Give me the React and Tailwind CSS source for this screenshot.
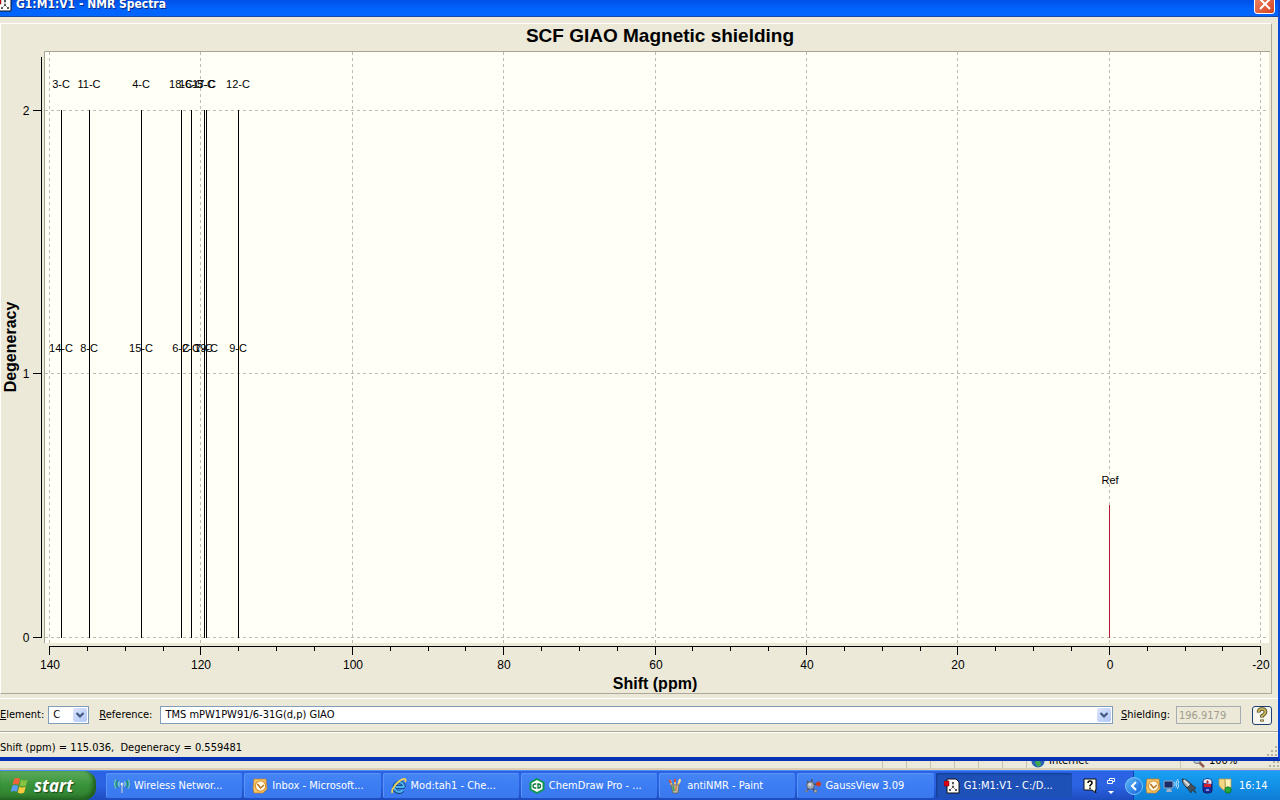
import { useState } from 'react';

const TICKS = [140, 120, 100, 80, 60, 40, 20, 0, -20];

const PEAKS = [
  { x: 61, top: '3-C', bottom: '14-C' },
  { x: 89, top: '11-C', bottom: '8-C' },
  { x: 141, top: '4-C', bottom: '15-C' },
  { x: 181, top: '18-C', bottom: '6-C' },
  { x: 191, top: '16-C', bottom: '2-C' },
  { x: 204, top: '17-C', bottom: '7-C' },
  { x: 206, top: '5-C', bottom: '19-C' },
  { x: 238, top: '12-C', bottom: '9-C' }
];

const LEVELS = [
  { value: 2, y: 110 },
  { value: 1, y: 373 },
  { value: 0, y: 637 }
];

const ppmToX = (ppm) => Math.round(49 + (140 - ppm) * 7.57);

const MINOR = [];
for (let ppm = 135; ppm > -20; ppm -= 5) {
  if (ppm % 20 !== 0) MINOR.push(ppm);
}

const SpectrumChart = () => (
  <svg viewBox="1 24 1270 669" className="block w-full h-auto" fontFamily='"Liberation Sans", Arial, sans-serif' role="img" aria-label="SCF GIAO Magnetic shielding">
    <rect x="45" y="52" width="1224" height="591" fill="#fffff6" />
    <path d="M44.5 643V51.5H1270" fill="none" stroke="#a5a596" />

    {/* Grid */}
    <g stroke="#bcbcb2" strokeDasharray="3 3" shapeRendering="crispEdges">
      {TICKS.map((ppm) => (
        <path key={ppm} d={`M${ppmToX(ppm) + 0.5} 52V643`} />
      ))}
      {LEVELS.map((level) => (
        <path key={level.value} d={`M45 ${level.y + 0.5}H1267`} />
      ))}
    </g>

    {/* Axes */}
    <g stroke="#000" shapeRendering="crispEdges">
      <path d="M41.5 57V638" />
      {LEVELS.map((level) => (
        <path key={level.value} d={`M33 ${level.y + 0.5}H41`} />
      ))}
      <path d="M49 646.5H1261" />
      {TICKS.map((ppm) => (
        <path key={ppm} d={`M${ppmToX(ppm) + 0.5} 647V655`} />
      ))}
      {MINOR.map((ppm) => (
        <path key={ppm} d={`M${ppmToX(ppm) + 0.5} 647V651`} />
      ))}
    </g>

    {/* Peaks */}
    <g shapeRendering="crispEdges" stroke="#000">
      {PEAKS.map((peak) => (
        <path key={peak.x} d={`M${peak.x + 0.5} 110V638`} />
      ))}
    </g>
    <rect x="1109" y="505" width="1" height="133" fill="#b8183c" />
    <g fontSize="11" textAnchor="middle">
      {PEAKS.map((peak) => (
        <g key={peak.x}>
          <text x={peak.x} y="88">{peak.top}</text>
          <text x={peak.x} y="352">{peak.bottom}</text>
        </g>
      ))}
      <text x="1110" y="484">Ref</text>
    </g>

    <g fontSize="12" textAnchor="middle">
      {TICKS.map((ppm) => (
        <text key={ppm} x={ppmToX(ppm) + 1} y="669">{ppm}</text>
      ))}
      {LEVELS.map((level) => (
        <text key={level.value} x="26" y={level.y + 5}>{level.value}</text>
      ))}
    </g>
    <g fontWeight="bold" textAnchor="middle">
      <text x="660" y="42" fontSize="19">SCF GIAO Magnetic shielding</text>
      <text x="655" y="689" fontSize="16">Shift (ppm)</text>
      <text transform="translate(16 347) rotate(-90)" fontSize="16">Degeneracy</text>
    </g>
  </svg>
);

const MoleculeIcon = () => (
  <svg viewBox="0 0 16 16" className="w-4 h-4 shrink-0">
    <path d="M3 1h9l3 3v11H3z" fill="#fff" stroke="#111" />
    <path d="M9 5v4l-3 3M9 9l3 3" stroke="#999" strokeWidth="1" fill="none" />
    <path d="M8 4h2v2H8zM5 11h2v2H5zM11 11h2v2h-2zM8 8h2v2H8z" fill="#555" />
    <path d="M0 3h5v5H0z" fill="#e00012" stroke="#600" strokeWidth=".5" />
  </svg>
);

const WirelessIcon = () => (
  <svg viewBox="0 0 16 16" className="w-4 h-4 shrink-0" fill="none">
    <path d="M8 7v8" stroke="#a8bcc8" strokeWidth="1.5" />
    <circle cx="8" cy="6" r="1.5" fill="#d6e6e6" />
    <path d="M5.5 3.5q-2 2.500 0 5M10.500 3.500q2 2.500 0 5" stroke="#a8e8b8" />
    <path d="M3.500 2.500q-2.500 3.500 0 7M12.500 2.500q2.500 3.500 0 7" stroke="#1c9a5c" strokeWidth="1.300" />
    <path d="M1.500 1.500q-2 4.500 0 9M14.500 1.500q2 4.500 0 9" stroke="#7cd89c" />
  </svg>
);

const OutlookIcon = () => (
  <svg viewBox="0 0 16 16" className="w-4 h-4 shrink-0">
    <path d="M2 1h12l1 10-4 4H2l-1-5z" fill="#f6c86a" stroke="#c27a20" strokeWidth=".7" />
    <circle cx="8.500" cy="8" r="5.200" fill="#fff8e6" stroke="#e09a35" strokeWidth="1.300" />
    <path d="M5.500 6l3 4 3.500-3" stroke="#b8741c" strokeWidth="1.500" fill="none" />
  </svg>
);

const ExplorerIcon = () => (
  <svg viewBox="0 0 16 16" className="w-4 h-4 shrink-0" fill="none">
    <path d="M13.500 9H5M13.200 9A5 5 0 1 0 12 12.500" stroke="#123a70" strokeWidth="3.400" />
    <path d="M13 9H5M13 9A4.800 4.800 0 1 0 12 12" stroke="#4cb4ee" strokeWidth="2.200" />
    <path d="M1.500 15C-.5 12 7 2 13 1c2-.3 2 1.500 1 3" stroke="#f0d050" strokeWidth="1.800" />
  </svg>
);

const ChemDrawIcon = () => (
  <svg viewBox="0 0 16 16" className="w-4 h-4 shrink-0" fill="none">
    <path d="M8 0l7.500 4v8L8 16 .5 12V4z" fill="#0d9650" />
    <path d="M8 2l5.500 3v6L8 14l-5.500-3V5z" fill="#fff" />
    <path d="M7.300 6H6a2 2 0 0 0 0 4h1.300M9 6v4h.5a2 2 0 0 0 0-4z" stroke="#08743c" strokeWidth="1.300" />
  </svg>
);

const PaintIcon = () => (
  <svg viewBox="0 0 16 16" className="w-4 h-4 shrink-0" fill="none">
    <path d="M5 8L3 2M8 8V1M10 9l3-7" stroke="#e8c070" strokeWidth="2" />
    <path d="M4 5L2 2M8 4V1" stroke="#d04838" strokeWidth="1.800" />
    <path d="M12 5l1-4" stroke="#f0e0a0" strokeWidth="2" />
    <path d="M4 7h8l-1 8H6z" fill="#b6b8ae" stroke="#6a5a4a" strokeWidth=".7" />
    <path d="M6 8l1 5" stroke="#50a060" strokeWidth="2" />
    <path d="M9 8v5" stroke="#d88438" strokeWidth="1.500" />
  </svg>
);

const GaussViewIcon = () => (
  <svg viewBox="0 0 16 16" className="w-4 h-4 shrink-0" fill="none">
    <path d="M6 7l6-1M6 8l4 5M6 7L2 3M5 8l-3 5M6 7l1-6" stroke="#484850" strokeWidth="1.300" />
    <circle cx="5.500" cy="7.500" r="3.800" fill="#a4acb8" stroke="#5c6270" />
    <circle cx="4.800" cy="6.500" r="1.500" fill="#d6dae0" />
    <circle cx="13.500" cy="6" r="2.500" fill="#cc3d20" />
    <circle cx="10.500" cy="13" r="1.700" fill="#aaaeb6" stroke="#444" strokeWidth=".5" />
    <circle cx="1.500" cy="13" r="1.300" fill="#7c8088" />
  </svg>
);

const WindowsLogo = () => (
  <svg viewBox="0 0 20 18" className="w-5 h-5 shrink-0">
    <path d="M4 2q3-2 6 0L8.500 8q-3-2-6 0z" fill="#ee6438" />
    <path d="M11 2.500q3 2 6.500 0L16 8.500q-3 2-6.500 0z" fill="#86c440" />
    <path d="M2.200 9q3-2 6 0L6.700 15q-3-2-6 0z" fill="#5c9cf2" />
    <path d="M9.200 9.500q3 2 6.500 0L14.200 15.500q-3 2-6.500 0z" fill="#fac83c" />
  </svg>
);

const ArrowBox = () => (
  <span className="absolute right-[2px] top-[2px] bottom-[2px] w-[14px] rounded-xs bg-linear-to-br from-[#dbe5fd] to-[#b1c6f5] flex items-center justify-center pointer-events-none">
    <svg viewBox="0 0 10 7" className="w-[10px] h-[7px]">
      <path d="M1.500 1L5 4.500 8.500 1" fill="none" stroke="#3f5782" strokeWidth="2.200" />
    </svg>
  </span>
);

const Grip = () => (
  <svg viewBox="0 0 12 12" className="w-3 h-3 shrink-0" fill="#b5b29f">
    <path d="M9 1h2v2H9zM5 5h2v2H5zM9 5h2v2H9zM1 9h2v2H1zM5 9h2v2H5zM9 9h2v2H9z" />
  </svg>
);

const TASKS = [
  { title: 'Wireless Networ...', Icon: WirelessIcon },
  { title: 'Inbox - Microsoft...', Icon: OutlookIcon },
  { title: 'Mod:tah1 - Che...', Icon: ExplorerIcon },
  { title: 'ChemDraw Pro - ...', Icon: ChemDrawIcon },
  { title: 'antiNMR - Paint', Icon: PaintIcon },
  { title: 'GaussView 3.09', Icon: GaussViewIcon },
  { title: 'G1:M1:V1 - C:/D...', Icon: MoleculeIcon }
];

const Taskbar = ({ active, onSelect }) => (
  <nav className="h-[30px] flex items-stretch bg-linear-to-b from-[#2a62e4] via-[#2b63e2] to-[#1e4cc0] border-t border-[#4d8cf4] text-white">
    <button className="w-24 mr-[10px] shrink-0 flex items-center gap-1 pl-[10px] rounded-r-xl bg-linear-to-b from-[#5cab5c] via-[#389238] to-[#2f7d2f] shadow-[inset_-3px_-2px_4px_#1f5c1f]">
      <WindowsLogo />
      <span className="font-['Open_Sans',sans-serif] text-[17px] leading-5 font-bold italic [text-shadow:1px_1px_1px_#1d4a1d]">start</span>
    </button>
    <div className="flex-1 min-w-0 flex gap-[2px] py-[2px]">
      {TASKS.map(({ title, Icon }) => (
        <button
          key={title}
          onClick={() => onSelect(title)}
          className={`flex-1 min-w-0 flex items-center gap-1 pl-2 rounded-xs whitespace-nowrap overflow-hidden ${
            active === title
              ? 'bg-[#1e51b8] shadow-[inset_1px_1px_2px_#123a8c]'
              : 'bg-linear-to-b from-[#4585f4] via-[#3c7df4] to-[#3a78ee] shadow-[inset_1px_1px_0_#5a94f8]'
          }`}
        >
          <Icon />
          <span>{title}</span>
        </button>
      ))}
    </div>
    <div className="w-[61px] shrink-0 flex items-center gap-[10px] pl-[11px]">
      <svg viewBox="0 0 14 15" className="w-[14px] h-[15px]">
        <path d="M1 1h12v11h-1l1 3-4-3H1z" fill="#fffff0" stroke="#111" />
        <path d="M5 5q0-2 2-2t2 2q0 1-2 2.500V8.500M7 9.500V11" fill="none" stroke="#000" strokeWidth="1.500" />
      </svg>
      <svg viewBox="0 0 8 18" className="w-2 h-[18px]" fill="none" stroke="#fff">
        <path d="M2.500 3V1.500h5v3H6M.5 3.500h5v3h-5z" />
        <path d="M1 14h6l-3 3z" fill="#fff" stroke="none" />
      </svg>
    </div>
    <div className="w-[147px] shrink-0 flex items-center gap-[2px] bg-linear-to-b from-[#18a0f0] via-[#1290e8] to-[#0f7cd4] border-l border-[#1042af]">
      <button aria-label="Show hidden icons" className="-ml-[9px] w-[18px] h-[18px] shrink-0 rounded-full bg-linear-to-br from-[#5cb8f8] to-[#1560d8] border border-[#7cc4fa] flex items-center justify-center">
        <svg viewBox="0 0 8 10" className="w-2 h-[10px]"><path d="M6 1L2 5l4 4" fill="none" stroke="#fff" strokeWidth="2" /></svg>
      </button>
      <OutlookIcon />
      <svg viewBox="0 0 16 16" className="w-4 h-4 shrink-0" fill="none">
        <path d="M1 3h9v7H1z" fill="#1a2c66" stroke="#94aac8" />
        <path d="M4 11h4l1 3H3z" fill="#a0b0c8" />
        <path d="M11.500 4q1.500 2 0 4M13 2.500q2 3.500 0 7M14.500 1q3 5 0 10" stroke="#c4e4ff" />
      </svg>
      <svg viewBox="0 0 16 16" className="w-4 h-4 shrink-0">
        <path d="M1 1q5 0 9 5l2 6-6-2Q1 6 1 1z" fill="#99a4ac" stroke="#26323c" />
        <path d="M3 2l7 8" stroke="#e4eaec" strokeWidth="1.500" />
        <path d="M10 6l5 4-2 1 2 4-4-3-1 3-4-5z" fill="#465058" stroke="#202830" strokeWidth=".6" />
      </svg>
      <svg viewBox="0 0 16 16" className="w-4 h-4 shrink-0">
        <rect x="4" y="1" width="9" height="14" rx="3" fill="#1c2c9a" stroke="#101c60" />
        <path d="M4.500 5V3q0-2 4-2t4 2v3z" fill="#e2e4f0" />
        <path d="M5 6h7v3H5z" fill="#d8202c" />
        <path d="M7 4h3M8.500 2.500v3" stroke="#c02030" />
        <path d="M7 11h3v2H7z" fill="#7c94e8" />
      </svg>
      <svg viewBox="0 0 16 16" className="w-4 h-4 shrink-0">
        <path d="M2 1h6v12l-4-3-2-3z" fill="#f2d884" stroke="#ba963c" strokeWidth=".7" />
        <path d="M8 1h6v9l-5 4z" fill="#fbf0b8" stroke="#ba963c" strokeWidth=".7" />
        <circle cx="11" cy="12" r="3.200" fill="#28a838" stroke="#0c6820" strokeWidth=".7" />
      </svg>
      <time className="ml-1">16:14</time>
    </div>
  </nav>
);

const App = () => {
  const [element, setElement] = useState('C');
  const [active, setActive] = useState('G1:M1:V1 - C:/D...');

  return (
    <div className="min-h-screen flex flex-col bg-[#ece9d8] text-black font-['DejaVu_Sans_Condensed','Liberation_Sans',sans-serif] text-[11px] leading-[14px]">
      <main className="border-r-2 border-b-4 border-r-[#0a48d8] border-b-[#0831b4]">
        {/* Title bar */}
        <header className="h-[17px] flex items-end justify-between overflow-hidden bg-linear-to-b from-[#0050e4] via-[#0062fc] to-[#0066ff] border-b border-[#1848a0]">
          <div className="flex items-center gap-1 -ml-1 pb-[4px]">
            <MoleculeIcon />
            <h1 className="text-white text-[12px] font-bold leading-4 [text-shadow:1px_1px_0_#0a2a80]">G1:M1:V1 - NMR Spectra</h1>
          </div>
          <button aria-label="Close" className="mb-[2px] mr-[3px] w-[21px] h-[21px] rounded-[3px] border border-white bg-linear-to-br from-[#f08a68] to-[#d4401c] flex items-center justify-center">
            <svg viewBox="0 0 12 12" className="w-3 h-3"><path d="M1 1l10 10M11 1L1 11" stroke="#fff" strokeWidth="2" /></svg>
          </button>
        </header>

        <div className="mt-[6px] mr-[6px] border border-t-white border-l-white border-r-[#aca899] border-b-[#aca899]">
          <SpectrumChart />
        </div>

        {/* Controls */}
        <form className="mt-1 h-[34px] flex items-center border-t border-t-white border-b border-b-[#aca899] pr-[6px]" onSubmit={(e) => e.preventDefault()}>
          <label htmlFor="element"><u>E</u>lement:</label>
          <div className="relative ml-1 w-[41px] h-[18px] shrink-0">
            <select id="element" value={element} onChange={(e) => setElement(e.target.value)} className="appearance-none block w-full h-full pl-1 bg-white border border-[#7f9db9]">
              <option>C</option>
            </select>
            <ArrowBox />
          </div>
          <label htmlFor="reference" className="ml-[10px]"><u>R</u>eference:</label>
          <div className="relative ml-2 flex-1 h-[18px]">
            <select id="reference" className="appearance-none block w-full h-full pl-1 bg-white border border-[#7f9db9]">
              <option>TMS mPW1PW91/6-31G(d,p) GIAO</option>
            </select>
            <ArrowBox />
          </div>
          <label htmlFor="shielding" className="ml-2"><u>S</u>hielding:</label>
          <input id="shielding" disabled defaultValue="196.9179" className="ml-[6px] w-[65px] h-[18px] pl-[2px] border border-[#a5acb2] text-[#a09d8c]" />
          <button aria-label="Help" className="ml-[11px] w-5 h-[19px] shrink-0 rounded-[3px] border border-[#1c4070] bg-[#f6f5ee] flex items-center justify-center">
            <svg viewBox="0 0 12 16" className="w-3 h-4" fill="none">
              <path d="M2.500 5.500q0-3.500 3.500-3.500t3.500 3q0 1.500-3.500 4v1.500M6 12.500v2" stroke="#4c451c" strokeWidth="3.600" />
              <path d="M2.500 5q0-3 3.500-3t3.500 3q0 1.500-3.500 4v1M6 12.500v1.500" stroke="#c5b45c" strokeWidth="2" />
            </svg>
          </button>
        </form>

        {/* Status bar */}
        <footer className="h-[25px] flex items-end justify-between border-t border-t-white">
          <p className="whitespace-pre pb-[2px]">Shift (ppm) = 115.036,  Degeneracy = 0.559481</p>
          <Grip />
        </footer>
      </main>

      {/* Browser status strip behind the window */}
      <div className="h-[9px] flex items-end justify-end overflow-hidden border-b-2 border-[#dccfb4] bg-[#ebe8dc]">
        {[1, 2, 3, 4, 5, 6].map((n) => (
          <span key={n} className="w-6 h-[7px] shrink-0 border-l border-[#c8c4b2]"></span>
        ))}
        <div className="w-[154px] h-[7px] shrink-0 flex items-end gap-1 border-l border-[#c8c4b2] pl-1">
          <svg viewBox="0 0 14 14" className="w-[14px] h-[14px]">
            <circle cx="7" cy="7" r="6.500" fill="#2a64b4" />
            <path d="M5 6l4 1 1 4-3 2-3-4z" fill="#40a850" />
          </svg>
          <span>Internet</span>
        </div>
        <div className="w-[88px] h-[7px] shrink-0 flex items-end gap-1 border-l border-[#c8c4b2] pl-3">
          <svg viewBox="0 0 12 12" className="w-3 h-3"><path d="M6 6l5 5" stroke="#905c4c" strokeWidth="2.500" /><circle cx="4" cy="4" r="3.500" fill="#bcd" stroke="#777" /></svg>
          <span>100%</span>
        </div>
        <Grip />
      </div>

      <Taskbar active={active} onSelect={setActive} />
    </div>
  );
};

export default App;
